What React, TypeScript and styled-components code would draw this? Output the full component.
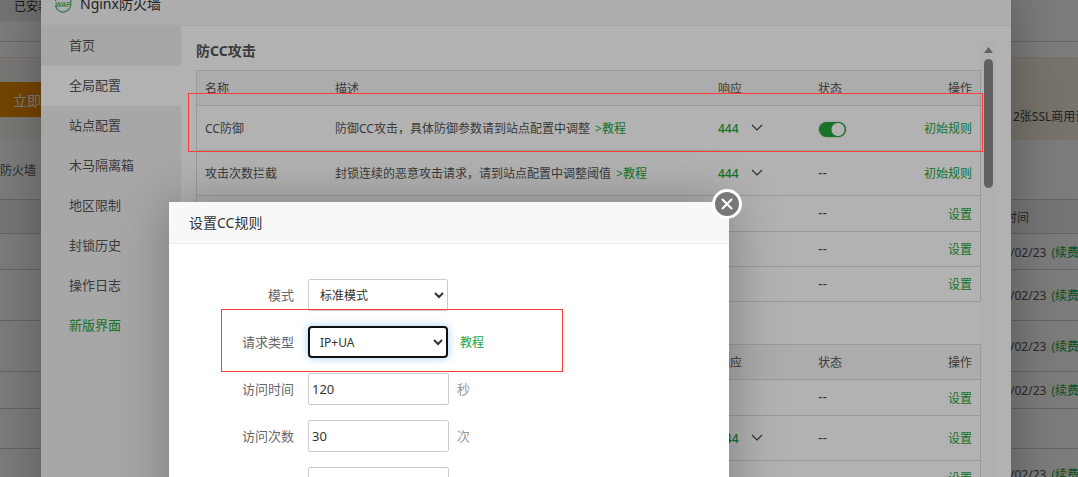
import React from "react";
import styled, { createGlobalStyle, css } from "styled-components";

const GREEN = "#20a53a";

const GlobalStyle = createGlobalStyle`
  * { box-sizing: border-box; }
  html, body { margin: 0; height: 100%; overflow: hidden; }
  body, button, input, select {
    font-family: "Noto Sans", "Noto Sans CJK SC", sans-serif;
    font-size: 12px;
    color: #555;
  }
  a { color: ${GREEN}; text-decoration: none; }
  button { border: 0; padding: 0; background: none; cursor: pointer; }
`;

const Desktop = styled.div`
  position: relative;
  height: 100vh;
  overflow: hidden;
  background: #fff;
`;

/* ---------- store page underneath ---------- */

const StorePage = styled.div`
  display: flex;
  flex-direction: column;
`;

const StoreTop = styled.div`
  height: 42px;
  border-bottom: 1px solid #d4d4d4;
`;

const InstalledTab = styled.div`
  width: 120px;
  height: 21px;
  padding-left: 14px;
  font-size: 12px;
  line-height: 13px;
  background: #ededed;
  color: #333;
`;

const Banner = styled.div`
  display: flex;
  align-items: center;
  justify-content: space-between;
  height: 83px;
  margin-top: 15px;
  border-top: 1px solid #f5e6d8;
  background: linear-gradient(160deg, #fbf8f2, #f6eddd);
`;

const BuyButton = styled.button`
  width: 82px;
  height: 35px;
  margin-top: 1px;
  padding-left: 13px;
  text-align: left;
  font-size: 14px;
  color: #fff;
  background: #ee8f00;
`;

const BannerNote = styled.span`
  width: 65px;
  padding-top: 36px;
  line-height: 18px;
  padding-bottom: 0;
  white-space: nowrap;
  color: #444;
`;

const Category = styled.div`
  height: 59px;
  line-height: 62px;
  color: #555;
`;

const StoreTable = styled.table`
  width: 100%;
  table-layout: fixed;
  border-collapse: collapse;
  white-space: nowrap;
  th, td {
    padding: 0;
    border-top: 1px solid #d2d2d2;
    font-weight: 400;
    text-align: left;
  }
  th { background: #f2f2f2; }
  th:last-child { width: 73px; }
  td:last-child { padding-left: 5px; }
`;

const StoreRow = styled.tr<{ $h: number }>`
  height: ${(p) => p.$h}px;
`;

/* ---------- layers ---------- */

const Shade = styled.div`
  position: absolute;
  inset: 0;
  background: rgba(0, 0, 0, 0.3);
`;

const layer = css`
  position: absolute;
  display: flex;
  flex-direction: column;
  background: #fff;
  box-shadow: 1px 1px 50px rgba(0, 0, 0, 0.3);
`;

const FirewallWindow = styled.section`
  ${layer}
  top: -17px;
  bottom: -60px;
  left: 41px;
  right: 67px;
`;

const RuleDialog = styled.section`
  ${layer}
  top: 202px;
  left: 169px;
  width: 560px;
`;

const TitleBar = styled.header`
  display: flex;
  align-items: center;
  flex: none;
  gap: 8px;
  height: 42px;
  padding: 0 20px 1px;
  border-bottom: 1px solid #eee;
  background: #f8f8f8;
  font-size: 14px;
  color: #333;
`;

const IconTitleBar = styled(TitleBar)`
  height: 43px;
  padding: 0 13px 2px;
`;

const CloseButton = styled.button`
  position: absolute;
  top: -13px;
  right: -13px;
  width: 30px;
  height: 30px;
  border: 3px solid #fff;
  border-radius: 50%;
  background: #787878;
  svg { display: block; margin: auto; }
`;

function Close() {
  return (
    <CloseButton aria-label="关闭">
      <svg width="12" height="12" viewBox="0 0 12 12" stroke="#fff" strokeWidth="2" strokeLinecap="round">
        <path d="M1.5 1.5L10.5 10.5M10.5 1.5L1.5 10.5" />
      </svg>
    </CloseButton>
  );
}

/* ---------- firewall window ---------- */

const WindowBody = styled.div`
  display: flex;
  flex: 1;
  min-height: 0;
`;

const Sidebar = styled.nav`
  display: flex;
  flex-direction: column;
  flex: none;
  width: 140px;
  background: #f0f0f1;
`;

const SideLink = styled.a<{ $active?: boolean; $accent?: boolean }>`
  height: 40px;
  padding-left: 28px;
  font-size: 13px;
  line-height: 38px;
  color: ${(p) => (p.$accent ? GREEN : "#555")};
  background: ${(p) => (p.$active ? "#fff" : "transparent")};
`;

const Content = styled.div`
  display: flex;
  flex: 1;
  min-width: 0;
  padding: 15px 15px 0;
`;

const Sections = styled.main`
  flex: 1;
  min-width: 0;
  overflow: hidden;
`;

const SectionTitle = styled.h2`
  margin: 0 0 10px;
  font-size: 14px;
  line-height: 19px;
  font-weight: 700;
`;

const RuleTable = styled.table`
  width: 100%;
  margin-bottom: 42px;
  table-layout: fixed;
  border-collapse: separate;
  border-spacing: 0;
  border: 1px solid #ddd;
  border-bottom: 0;
  th, td {
    padding: 0 8px;
    border-bottom: 1px solid #ddd;
    font-weight: 400;
    text-align: left;
    white-space: nowrap;
  }
  th { background: #f6f6f6; }
  th:nth-child(1) { width: 130px; }
  th:nth-child(3) { width: 100px; }
  th:nth-child(4) { width: 80px; }
  th:nth-child(5) { width: 90px; }
  th:last-child, td:last-child { text-align: right; }
`;

const RuleRow = styled.tr<{ $h: number }>`
  height: ${(p) => p.$h}px;
`;

const RuleHelp = styled.a`
  margin-left: 2px;
`;

const StatusCode = styled.button`
  display: flex;
  align-items: center;
  gap: 12px;
  font-size: 12px;
  font-weight: 500;
  color: ${GREEN};
`;

const Dashes = styled.span`
  font-size: 14px;
  line-height: 16px;
`;

const Toggle = styled.input`
  appearance: none;
  display: block;
  width: 27px;
  height: 15px;
  margin: 2px 0 0 1px;
  border-radius: 8px;
  background: radial-gradient(circle at 19px 50%, #fff 6px, transparent 7px) ${GREEN};
  box-shadow: 0 0 2px rgba(0, 0, 0, 0.3);
`;

const ScrollTrack = styled.div`
  display: flex;
  flex-direction: column;
  align-items: center;
  flex: none;
  width: 15px;
  padding-top: 6px;
  gap: 6px;
  background: #fcfcfc;
`;

const ScrollThumb = styled.div`
  width: 9px;
  height: 129px;
  border-radius: 5px;
  background: #8b8b8b;
`;

/* ---------- rule dialog ---------- */

const Form = styled.form`
  display: flex;
  flex-direction: column;
  gap: 15px;
  padding: 35px 0 40px 20px;
`;

const Field = styled.div`
  display: flex;
  align-items: center;
  height: 32px;
`;

const Label = styled.label`
  width: 105px;
  margin-right: 14px;
  padding-bottom: 2px;
  font-size: 13px;
  text-align: right;
  color: #666;
`;

const Select = styled.select<{ $focused?: boolean }>`
  width: 140px;
  height: 32px;
  padding: 0 0 0 ${(p) => (p.$focused ? 6 : 7)}px;
  border: ${(p) => (p.$focused ? "2px solid #101010" : "1px solid #ccc")};
  border-radius: ${(p) => (p.$focused ? 4 : 2)}px;
  background: #fff;
  color: #333;
  box-shadow: ${(p) => (p.$focused ? "0 0 8px rgba(102, 175, 233, 0.6)" : "none")};
`;

const NumberBox = styled.input`
  width: 141px;
  height: 32px;
  padding: 0 3px;
  border: 1px solid #ccc;
  border-radius: 2px;
  font-size: 13px;
  color: #333;
`;

const Unit = styled.span`
  margin-left: 8px;
  padding-bottom: 2px;
  font-size: 13px;
  color: #999;
`;

const HelpLink = styled.a`
  margin-left: 12px;
`;

/* ---------- red annotation frames ---------- */

const Frame = styled.div`
  position: absolute;
  border: 1px solid #fb3c38;
  pointer-events: none;
`;

const RowFrame = styled(Frame)`
  top: 93px;
  left: 188px;
  right: 95px;
  height: 59px;
`;

const FieldFrame = styled(Frame)`
  top: 309px;
  left: 221px;
  width: 342px;
  height: 63px;
`;

type Rule = {
  h: number;
  name?: string;
  text?: string;
  code?: boolean;
  on?: boolean;
  action: string;
};

const ccRules: Rule[] = [
  { h: 45, name: "CC防御", text: "防御CC攻击，具体防御参数请到站点配置中调整", code: true, on: true, action: "初始规则" },
  { h: 45, name: "攻击次数拦截", text: "封锁连续的恶意攻击请求，请到站点配置中调整阈值", code: true, action: "初始规则" },
  { h: 36, action: "设置" },
  { h: 35, action: "设置" },
  { h: 35, action: "设置" },
];

const moreRules: Rule[] = [
  { h: 36, action: "设置" },
  { h: 45, code: true, action: "设置" },
  { h: 35, action: "设置" },
];

const storeRows = [
  { h: 36, date: true },
  { h: 51, date: true },
  { h: 51, date: true },
  { h: 37, date: true },
  { h: 40, date: false },
  { h: 51, date: true },
];

function Rules({ rules }: { rules: Rule[] }) {
  return (
    <RuleTable>
      <thead>
        <RuleRow $h={35}>
          <th>名称</th>
          <th>描述</th>
          <th>响应</th>
          <th>状态</th>
          <th>操作</th>
        </RuleRow>
      </thead>
      <tbody>
        {rules.map((r, i) => (
          <RuleRow key={i} $h={r.h}>
            <td>{r.name}</td>
            <td>
              {r.text && (
                <>
                  {r.text} <RuleHelp href="#help">&gt;教程</RuleHelp>
                </>
              )}
            </td>
            <td>
              {r.code && (
                <StatusCode>
                  444
                  <svg width="12" height="8" viewBox="0 0 12 8" fill="none" stroke="#444" strokeWidth="1.2">
                    <path d="M1 1L6 6L11 1" />
                  </svg>
                </StatusCode>
              )}
            </td>
            <td>
              {r.on ? <Toggle type="checkbox" defaultChecked aria-label={r.name} /> : <Dashes>--</Dashes>}
            </td>
            <td>
              <a href="#set">{r.action}</a>
            </td>
          </RuleRow>
        ))}
      </tbody>
    </RuleTable>
  );
}

function WafIcon() {
  return (
    <svg width="18" height="20" viewBox="0 0 18 20" fill="none" stroke="#4ab268" strokeWidth="1.3">
      <path d="M1.500 12.500C2 16.500 5 18.500 9 19.300C14 18 16.800 15 16.800 11V4Q12.500 4 9 1.500Q5.500 4 1.500 4V8" />
      <text x="1" y="14" fontSize="7" fontWeight="700" fontStyle="italic" fontFamily="Liberation Sans, sans-serif" fill="#4ab268" stroke="none">
        WAF
      </text>
    </svg>
  );
}

export default function App() {
  return (
    <Desktop>
      <GlobalStyle />
      <StorePage>
        <StoreTop>
          <InstalledTab>已安装</InstalledTab>
        </StoreTop>
        <Banner>
          <BuyButton>立即</BuyButton>
          <BannerNote>2张SSL商用证书</BannerNote>
        </Banner>
        <Category>防火墙</Category>
        <StoreTable>
          <thead>
            <StoreRow $h={34}>
              <th />
              <th>时间</th>
            </StoreRow>
          </thead>
          <tbody>
            {storeRows.map((r, i) => (
              <StoreRow key={i} $h={r.h}>
                <td />
                <td>
                  {r.date && (
                    <>
                      /02/23 <RuleHelp href="#renew">(续费)</RuleHelp>
                    </>
                  )}
                </td>
              </StoreRow>
            ))}
          </tbody>
        </StoreTable>
      </StorePage>
      <Shade />

      <FirewallWindow>
        <IconTitleBar>
          <WafIcon />
          Nginx防火墙
        </IconTitleBar>
        <WindowBody>
          <Sidebar>
            <SideLink href="#home">首页</SideLink>
            <SideLink href="#global" $active>全局配置</SideLink>
            <SideLink href="#site">站点配置</SideLink>
            <SideLink href="#trojan">木马隔离箱</SideLink>
            <SideLink href="#region">地区限制</SideLink>
            <SideLink href="#blocked">封锁历史</SideLink>
            <SideLink href="#logs">操作日志</SideLink>
            <SideLink href="#new" $accent>新版界面</SideLink>
          </Sidebar>
          <Content>
            <Sections>
              <SectionTitle>防CC攻击</SectionTitle>
              <Rules rules={ccRules} />
              <Rules rules={moreRules} />
            </Sections>
            <ScrollTrack>
              <svg width="9" height="6" viewBox="0 0 9 6" fill="#8b8b8b">
                <path d="M4.500 0L9 6H0Z" />
              </svg>
              <ScrollThumb />
            </ScrollTrack>
          </Content>
        </WindowBody>
        <Close />
      </FirewallWindow>
      <Shade />

      <RuleDialog role="dialog" aria-label="设置CC规则">
        <TitleBar>设置CC规则</TitleBar>
        <Form>
          <Field>
            <Label htmlFor="mode">模式</Label>
            <Select id="mode">
              <option>标准模式</option>
            </Select>
          </Field>
          <Field>
            <Label htmlFor="kind">请求类型</Label>
            <Select id="kind" $focused>
              <option>IP+UA</option>
            </Select>
            <HelpLink href="#help">教程</HelpLink>
          </Field>
          <Field>
            <Label htmlFor="period">访问时间</Label>
            <NumberBox id="period" defaultValue="120" />
            <Unit>秒</Unit>
          </Field>
          <Field>
            <Label htmlFor="count">访问次数</Label>
            <NumberBox id="count" defaultValue="30" />
            <Unit>次</Unit>
          </Field>
          <Field>
            <Label htmlFor="block" />
            <NumberBox id="block" aria-label="封锁时间" />
          </Field>
        </Form>
        <Close />
      </RuleDialog>

      <RowFrame />
      <FieldFrame />
    </Desktop>
  );
}
